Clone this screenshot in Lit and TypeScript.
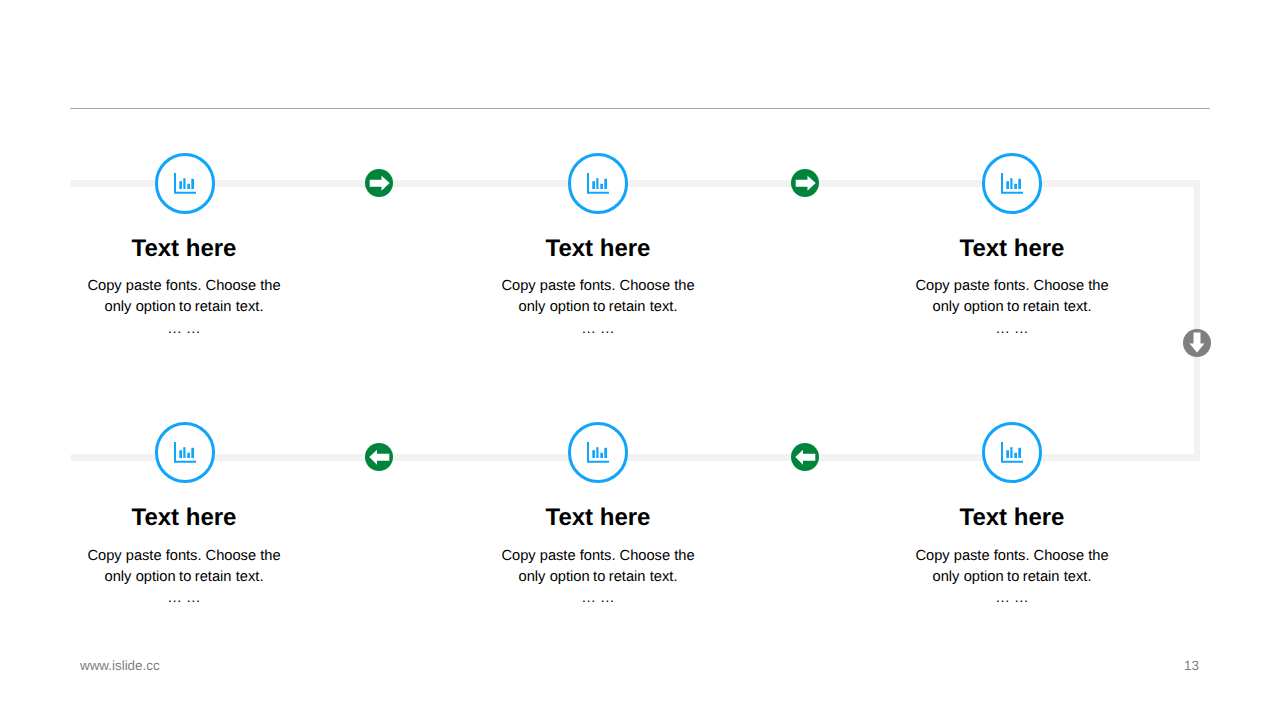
import { LitElement, html, css, svg } from "lit";
import { customElement } from "lit/decorators.js";

const chart = html`<svg class="chart" viewBox="0 0 22 21" width="22" height="21" fill="#0fa5fb">
  <path d="M0 0h2v18.800h20v2H0z"/>
  <rect x="5.300" y="8.200" width="2.700" height="7.800"/>
  <rect x="9.300" y="5.200" width="2.200" height="10.800"/>
  <rect x="13.300" y="10.800" width="2.700" height="5.200"/>
  <rect x="17.300" y="5.800" width="2.700" height="10.200"/>
</svg>`;

const arrowPaths = {
  right: "M4.700 10.800h11.800V6.800l8.200 7.300-8.200 7.600v-3.900H4.700z",
  left: "M24.300 10.800H12V6.800l-7.700 7.300 7.700 7.600v-3.900h12.300z",
  down: "M10.500 3.500v11H6.500l7.500 9 7.500-9h-4v-11z",
};

type Dir = keyof typeof arrowPaths;

const arrow = (dir: Dir, color: string, x: number, y: number) => html`<svg
  class="arrow" viewBox="0 0 28 28" width="28" height="28"
  style="left:${x}px;top:${y}px">
  ${svg`<circle cx="14" cy="14" r="14" fill=${color}></circle>
  <path d=${arrowPaths[dir]} fill="#fff"></path>`}
</svg>`;

const node = html`<div class="node">
  <div class="ring">${chart}</div>
  <div class="title">Text here</div>
  <div class="body">
    <div>Copy paste fonts. Choose the</div>
    <div class="tight"><span class="wide">only</span> option to <span class="wide">retain</span> text.</div>
    <div class="dots">… …</div>
  </div>
</div>`;

@customElement("app-root")
export class AppRoot extends LitElement {
  static styles = css`
    :host {
      display: block;
      position: relative;
      width: 1280px;
      height: 720px;
      background: #fff;
      overflow: hidden;
      font-family: "Liberation Sans", Arial, sans-serif;
      color: #000;
      text-rendering: geometricPrecision;
    }
    .rule {
      height: 1px;
      background: #a6a6a6;
      margin: 0 70px;
      position: relative;
      top: 108px;
    }
    .track {
      position: absolute;
      left: 71px;
      top: 180px;
      width: 1129px;
      height: 281px;
      box-sizing: border-box;
      border: 7px solid #f2f2f2;
      border-right-width: 6px;
      border-left: 0;
    }
    .arrow {
      position: absolute;
      display: block;
    }
    .rows {
      position: absolute;
      left: 64px;
      top: 153.200px;
      display: grid;
      grid-template-columns: repeat(3, 240px);
      column-gap: 174px;
      grid-auto-rows: 269.250px;
    }
    .node {
      display: flex;
      flex-direction: column;
      align-items: center;
    }
    .ring {
      width: 60.500px;
      height: 60.500px;
      box-sizing: border-box;
      border: 3px solid #0fa5fb;
      border-radius: 50%;
      background: #fff;
      display: flex;
      align-items: center;
      justify-content: center;
      position: relative;
    }
    .node:nth-child(3n + 1) .ring {
      margin-left: 2px;
    }
    .chart {
      display: block;
    }
    .title {
      margin-top: 21px;
      font-size: 24px;
      line-height: 28px;
      font-weight: 700;
    }
    .body {
      margin-top: 13.750px;
      font-size: 14.670px;
      line-height: 21px;
      text-align: center;
      white-space: nowrap;
    }
    .tight {
      word-spacing: -0.600px;
    }
    .wide {
      margin-right: 0.800px;
    }
    .dots {
      margin-top: 0.550px;
    }
    .footer {
      position: absolute;
      left: 80px;
      right: 81px;
      top: 658px;
      display: flex;
      justify-content: space-between;
      font-size: 13.400px;
      line-height: 16px;
      color: #7f7f7f;
    }
  `;

  render() {
    return html`
      <div class="rule"></div>
      <div class="track"></div>
      <div class="rows">${[0, 1, 2, 3, 4, 5].map(() => node)}</div>
      ${arrow("right", "#00843d", 365.250, 169.250)}
      ${arrow("right", "#00843d", 791, 169.250)}
      ${arrow("down", "#7f7f7f", 1183, 329.250)}
      ${arrow("left", "#00843d", 365.250, 443.250)}
      ${arrow("left", "#00843d", 791, 443.250)}
      <div class="footer"><span>www.islide.cc</span><span>13</span></div>
    `;
  }
}
